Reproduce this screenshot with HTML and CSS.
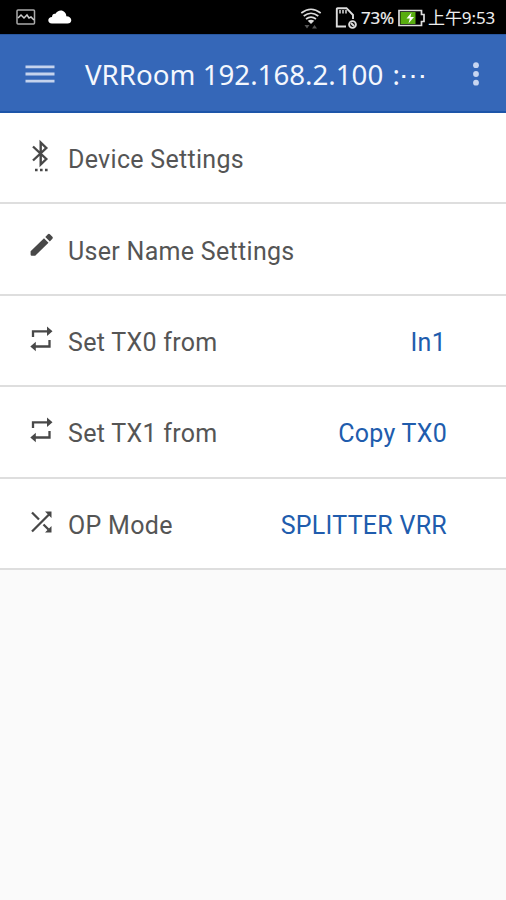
FILE: index.html
```html
<!DOCTYPE html>
<html lang="en">
<head><meta charset="utf-8"><title>VRRoom</title><link rel="stylesheet" href="styles.css"></head>
<body>
<div class="status">
  <svg class="pic" width="20" height="16" viewBox="0 0 20 16" fill="none" stroke="#aaa" stroke-width="1.5"><rect x="1" y="1" width="17.500" height="14" rx="1"/><path d="M2 9l3-3 3 3 3-3 2 3 2-1 3 3" stroke="#ccc"/></svg>
  <svg class="cloud" width="24" height="14" viewBox="0 0 24 14" fill="#fff"><path d="M4 13.500C1.500 13.500.3 12 .3 10.300.3 8.400 1.800 7 4 6.900 4 4.600 5.700 3.300 7.500 3.800 9 .5 14-.8 16.700 2.200 18 3.600 18.300 5 18.300 6.200 21.500 6.200 23.300 8 23.300 10.200 23.300 12.200 21.700 13.500 19.500 13.500z"/></svg>
  <svg class="wifi" width="22" height="21" viewBox="0 0 22 21" fill="none" stroke="#ddd" stroke-width="1.600"><path d="M1.300 5Q11-2.600 20.700 5M3.700 8Q11 2.400 18.300 8M6 11Q11 7.200 16 11"/><path d="M7.700 12.800Q11 10.500 14.300 12.800L11 16z" fill="#ddd" stroke="none"/><path d="M4.500 17h5l-2.500 3.500zM12 20.500h5l-2.500-3.500z" fill="#555" stroke="none"/></svg>
  <svg class="sim" width="23" height="22" viewBox="0 0 23 22" fill="none" stroke="#ddd" stroke-width="1.900"><path d="M11 19.500H1.800V2Q1.800 1.200 2.600 1.200H11.500L18 8v4"/><path d="M5 3v3.500M8 3v3.500M11 3v3.500" stroke-width="1.500"/><circle cx="17.500" cy="17.500" r="3.400"/><path d="M16 16l3 3"/></svg>
  <span class="pct">73%</span>
  <svg class="bat" width="27" height="18" viewBox="0 0 27 18"><path d="M1 1.500h22.500v4H26v7h-2.500v4H1z" fill="none" stroke="#ddd" stroke-width="1.700"/><path d="M2.500 3h15v12h-15z" fill="#58ad10"/><path d="M13.500 3.500L8.500 9.500h3.300L10.500 14.500 16 8h-3.500z" fill="#fff"/></svg>
  <span class="clock">上午9:53</span>
</div>
<header class="bar">
  <svg class="menu" width="30" height="20" viewBox="0 0 30 20" stroke="#c5d3ed" stroke-width="2.800"><path d="M.5 2.800h29M.5 10h29M.5 17.200h29"/></svg>
  <h1>VRRoom 192.168.2.100 <span class="tail">:⋯</span></h1>
  <svg class="more" width="8" height="24" viewBox="0 0 8 24" fill="#c8d6f1"><circle cx="4" cy="3.200" r="2.900"/><circle cx="4" cy="12" r="2.900"/><circle cx="4" cy="20.700" r="2.900"/></svg>
</header>
<main>
  <div class="row"><svg class="icon" width="28" height="34" viewBox="0 0 28 34" fill="none" stroke="#484848" stroke-width="2.400"><path d="M5 7.500L18.300 20 12.700 25.500V3.500L18.300 9 5 21.500"/><path d="M7 31h2.600M12 31h2.600M17 31h2.600" stroke-width="2.400"/></svg><span class="label">Device Settings</span></div>
  <div class="row"><svg class="icon" width="28" height="34" viewBox="0 0 28 34" fill="#484848"><path d="M2.600 23.500v-3.200L16 7.200l4.500 4.500L7.200 24.800H3.800q-1.200 0-1.200-1.300zM17.300 5.900l2.600-2.600q1-1 2 0l2.500 2.500q1 1 0 2l-2.600 2.600z"/></svg><span class="label">User Name Settings</span></div>
  <div class="row"><svg class="icon" width="28" height="34" viewBox="0 0 28 34"><path d="M5 15V9.300H19M21.500 18v6.500H7" fill="none" stroke="#484848" stroke-width="2.300"/><path d="M19 4.500l5.500 4.800-5.500 4.800zM7.800 19.700l-5.500 4.800 5.500 4.800z" fill="#484848"/></svg><span class="label">Set TX0 from</span><span class="value one">In1</span></div>
  <div class="row"><svg class="icon" width="28" height="34" viewBox="0 0 28 34"><path d="M5 15V9.300H19M21.500 18v6.500H7" fill="none" stroke="#484848" stroke-width="2.300"/><path d="M19 4.500l5.500 4.800-5.500 4.800zM7.800 19.700l-5.500 4.800 5.500 4.800z" fill="#484848"/></svg><span class="label">Set TX1 from</span><span class="value">Copy TX0</span></div>
  <div class="row"><svg class="icon" width="28" height="34" viewBox="0 0 28 34"><path d="M4 26.500L21.500 9M4 7.500l7 7M15.500 19.500l5 5" fill="none" stroke="#484848" stroke-width="2.300"/><path d="M17 6.500H23.500V13zM23.500 21V27.500H17z" fill="#484848"/></svg><span class="label">OP Mode</span><span class="value">SPLITTER VRR</span></div>
</main>
</body>
</html>
```
FILE: styles.css
```css
body{margin:0;background:#fafafa;font-family:Roboto,sans-serif}
svg{display:block;flex:none}
.status{height:34px;box-sizing:border-box;padding-left:16px;background:#000;color:#eee;display:flex;align-items:center;font-family:"Noto Sans","Noto Sans CJK TC",sans-serif;font-size:17px;white-space:nowrap}
.cloud{margin-left:12px}
.wifi{margin-left:228px;margin-top:2px}
.sim{margin-left:13px;margin-top:1px}
.pct{width:36px;margin-left:3px;letter-spacing:-.2px;-webkit-text-stroke:.2px #eee}
.bat{margin-left:1px;margin-top:1px}
.clock{margin:-2px 0 0 3px;letter-spacing:-.1px}
.bar{height:79px;box-sizing:border-box;padding:2px 26px 0 25px;background:#3567b8;color:#f4f7fd;border-top:1px solid #2857a0;border-bottom:2px solid #1d55a9;display:flex;align-items:center}
h1{margin:0 0 0 30px;font:400 27.7px/40px "Noto Sans",sans-serif;white-space:nowrap}
.tail{margin-left:2px;letter-spacing:-1px}
.more{margin-left:auto}
.row{height:91.4px;box-sizing:border-box;padding:0 60px 0 28px;background:#fff;border-bottom:2px solid #dedede;display:flex;align-items:center}
.icon{margin-top:-3px}
.label{margin:5px 0 0 12px;font-size:25px;line-height:30px;letter-spacing:.3px;color:#555}
.value{margin:5px -1px 0 auto;font-size:25px;line-height:30px;letter-spacing:.27px;color:#205cad}
.one{margin-right:0}
```
